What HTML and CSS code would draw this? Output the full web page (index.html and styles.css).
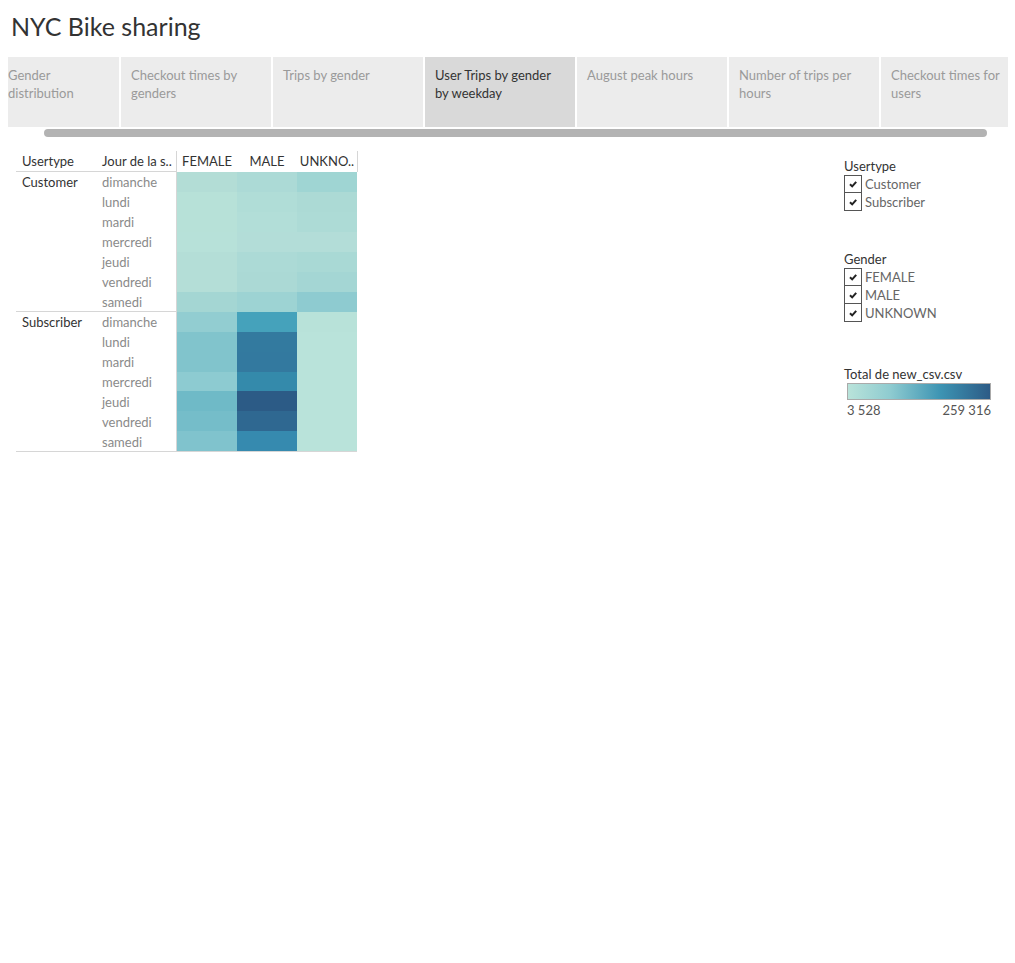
FILE: index.html
```html
<!DOCTYPE html>
<html>
<head>
<meta charset="utf-8">
<link rel="stylesheet" href="styles.css">
</head>
<body>
<div class="page">
  <h1 class="title">NYC Bike sharing</h1>
  <div class="tabs">
    <div class="tab first">Gender distribution</div>
    <div class="tab">Checkout times by genders</div>
    <div class="tab">Trips by gender</div>
    <div class="tab active">User Trips by gender by weekday</div>
    <div class="tab">August peak hours</div>
    <div class="tab">Number of trips per hours</div>
    <div class="tab">Checkout times for users</div>
  </div>
  <div class="scrollbar"></div>

  <div class="main">
    <div class="xtab">
      <div class="hdr">
        <div class="hlabels">
          <div class="hl">Usertype</div>
          <div class="hl">Jour de la s..</div>
        </div>
        <div class="hcols">
          <div class="hc">FEMALE</div>
          <div class="hc">MALE</div>
          <div class="hc">UNKNO..</div>
        </div>
      </div>

      <div class="group">
        <div class="glabels">
          <div class="gname">Customer</div>
          <div class="days">
            <div class="day">dimanche</div>
            <div class="day">lundi</div>
            <div class="day">mardi</div>
            <div class="day">mercredi</div>
            <div class="day">jeudi</div>
            <div class="day">vendredi</div>
            <div class="day">samedi</div>
          </div>
        </div>
        <div class="cells">
          <div class="c" style="background:#b3ddd6"></div><div class="c" style="background:#acdad6"></div><div class="c" style="background:#9fd5d3"></div>
          <div class="c" style="background:#b7e1d8"></div><div class="c" style="background:#b0ddd7"></div><div class="c" style="background:#acdad5"></div>
          <div class="c" style="background:#b7e1d8"></div><div class="c" style="background:#b2ded8"></div><div class="c" style="background:#addbd6"></div>
          <div class="c" style="background:#b7e1d9"></div><div class="c" style="background:#b3ddd8"></div><div class="c" style="background:#b3ddd8"></div>
          <div class="c" style="background:#b4ded7"></div><div class="c" style="background:#acdad6"></div><div class="c" style="background:#a9d9d5"></div>
          <div class="c" style="background:#b4ded7"></div><div class="c" style="background:#abd9d5"></div><div class="c" style="background:#a4d6d4"></div>
          <div class="c" style="background:#a4d6d3"></div><div class="c" style="background:#9dd3d3"></div><div class="c" style="background:#8ecbd0"></div>
        </div>
      </div>

      <div class="group last">
        <div class="glabels">
          <div class="gname">Subscriber</div>
          <div class="days">
            <div class="day">dimanche</div>
            <div class="day">lundi</div>
            <div class="day">mardi</div>
            <div class="day">mercredi</div>
            <div class="day">jeudi</div>
            <div class="day">vendredi</div>
            <div class="day">samedi</div>
          </div>
        </div>
        <div class="cells">
          <div class="c" style="background:#92cdd1"></div><div class="c" style="background:#45a2bb"></div><div class="c" style="background:#b8e2d9"></div>
          <div class="c" style="background:#81c4cc"></div><div class="c" style="background:#337a9f"></div><div class="c" style="background:#b9e3da"></div>
          <div class="c" style="background:#81c4cc"></div><div class="c" style="background:#33799f"></div><div class="c" style="background:#b9e3da"></div>
          <div class="c" style="background:#8dcbd1"></div><div class="c" style="background:#348aab"></div><div class="c" style="background:#b9e3da"></div>
          <div class="c" style="background:#6fbac7"></div><div class="c" style="background:#2c5b86"></div><div class="c" style="background:#b9e3da"></div>
          <div class="c" style="background:#75bdc9"></div><div class="c" style="background:#2f6891"></div><div class="c" style="background:#b9e3da"></div>
          <div class="c" style="background:#80c3cd"></div><div class="c" style="background:#368aaf"></div><div class="c" style="background:#b9e3da"></div>
        </div>
      </div>
    </div>

    <div class="side">
      <div class="filter">
        <div class="ftitle">Usertype</div>
        <div class="opt"><span class="cb"><svg viewBox="0 0 10 10" width="10" height="10"><path d="M2 5.2 L4.2 7.4 L8.2 2.8" fill="none" stroke="#222" stroke-width="2"/></svg></span><span class="ol">Customer</span></div>
        <div class="opt"><span class="cb"><svg viewBox="0 0 10 10" width="10" height="10"><path d="M2 5.2 L4.2 7.4 L8.2 2.8" fill="none" stroke="#222" stroke-width="2"/></svg></span><span class="ol">Subscriber</span></div>
      </div>
      <div class="filter gender">
        <div class="ftitle">Gender</div>
        <div class="opt"><span class="cb"><svg viewBox="0 0 10 10" width="10" height="10"><path d="M2 5.2 L4.2 7.4 L8.2 2.8" fill="none" stroke="#222" stroke-width="2"/></svg></span><span class="ol">FEMALE</span></div>
        <div class="opt"><span class="cb"><svg viewBox="0 0 10 10" width="10" height="10"><path d="M2 5.2 L4.2 7.4 L8.2 2.8" fill="none" stroke="#222" stroke-width="2"/></svg></span><span class="ol">MALE</span></div>
        <div class="opt"><span class="cb"><svg viewBox="0 0 10 10" width="10" height="10"><path d="M2 5.2 L4.2 7.4 L8.2 2.8" fill="none" stroke="#222" stroke-width="2"/></svg></span><span class="ol">UNKNOWN</span></div>
      </div>
      <div class="legend">
        <div class="ftitle">Total de new_csv.csv</div>
        <div class="ramp"></div>
        <div class="rlabels"><span>3 528</span><span>259 316</span></div>
      </div>
    </div>
  </div>
</div>
</body>
</html>
```
FILE: styles.css
```css
* { box-sizing: border-box; }
html, body { margin: 0; padding: 0; background: #fff; }
body {
  font-family: "Lato", "Open Sans", sans-serif;
  font-size: 13px;
  color: #333;
}
.page { width: 1015px; }

.title {
  margin: 0;
  height: 57px;
  padding: 11px 0 0 11px;
  font-size: 25px;
  font-weight: 400;
  line-height: 30px;
  color: #333;
}

.tabs {
  margin-left: 8px;
  width: 1000px;
  height: 70px;
  display: flex;
  gap: 2px;
  overflow: hidden;
}
.tab {
  flex: 0 0 150px;
  height: 70px;
  background: #ececec;
  padding: 9px 10px 0 10px;
  line-height: 18px;
  color: #9a9a9a;
}
.tab.first { flex-basis: 111px; padding-left: 0; }
.tab.active { background: #d9d9d9; color: #333; }

.scrollbar {
  margin: 2px 0 0 44px;
  width: 943px;
  height: 8px;
  border-radius: 4px;
  background: #b3b3b3;
}

.main {
  display: flex;
  justify-content: space-between;
  padding-top: 14px;
}

.xtab { margin-left: 16px; width: 341px; }

.hdr { display: flex; height: 21px; }
.hlabels {
  display: flex;
  width: 160px;
  border-bottom: 1px solid #d6d6d6;
}
.hl { width: 80px; padding: 1px 0 0 6px; line-height: 19px; color: #333; white-space: nowrap; }
.hcols {
  display: flex;
  border-left: 1px solid #d6d6d6;
  border-right: 1px solid #d6d6d6;
}
.hc { width: 60px; text-align: center; padding-top: 1px; line-height: 19px; color: #333; white-space: nowrap; }

.group { display: flex; height: 140px; }
.glabels {
  display: flex;
  width: 160px;
  border-bottom: 1px solid #d6d6d6;
}
.gname { width: 80px; padding-left: 6px; line-height: 20px; color: #333; }
.days { width: 80px; }
.day { height: 20px; line-height: 20px; padding-left: 6px; color: #8a8a8a; }
.day:last-child { height: 19px; }
.cells {
  display: grid;
  grid-template-columns: repeat(3, 60px);
  grid-template-rows: repeat(7, 1fr);
  border-left: 1px solid #d6d6d6;
}
.group.last .glabels { border-bottom: none; }
.group.last { border-bottom: 1px solid #d6d6d6; width: 341px; }

.side { width: 171px; padding-top: 7px; }
.ftitle { line-height: 16px; color: #333; margin-bottom: 1px; }
.opt { display: flex; align-items: center; height: 18px; }
.cb {
  width: 18px;
  height: 18px;
  border: 1px solid #555;
  display: flex;
  align-items: center;
  justify-content: center;
}
.opt + .opt .cb { border-top: none; height: 18px; }
.ol { margin-left: 3px; color: #666; }

.gender { margin-top: 40px; }
.legend { margin-top: 44px; }
.legend .ftitle { margin-bottom: 1px; }
.ramp {
  margin-left: 3px;
  width: 144px;
  height: 17px;
  border: 1px solid #aaa;
  background: linear-gradient(to right, #b9e3da, #8ecbd0 30%, #3d94b3 65%, #2c5b86);
}
.rlabels {
  margin-left: 3px;
  width: 144px;
  display: flex;
  justify-content: space-between;
  color: #555;
  line-height: 20px;
}
```
